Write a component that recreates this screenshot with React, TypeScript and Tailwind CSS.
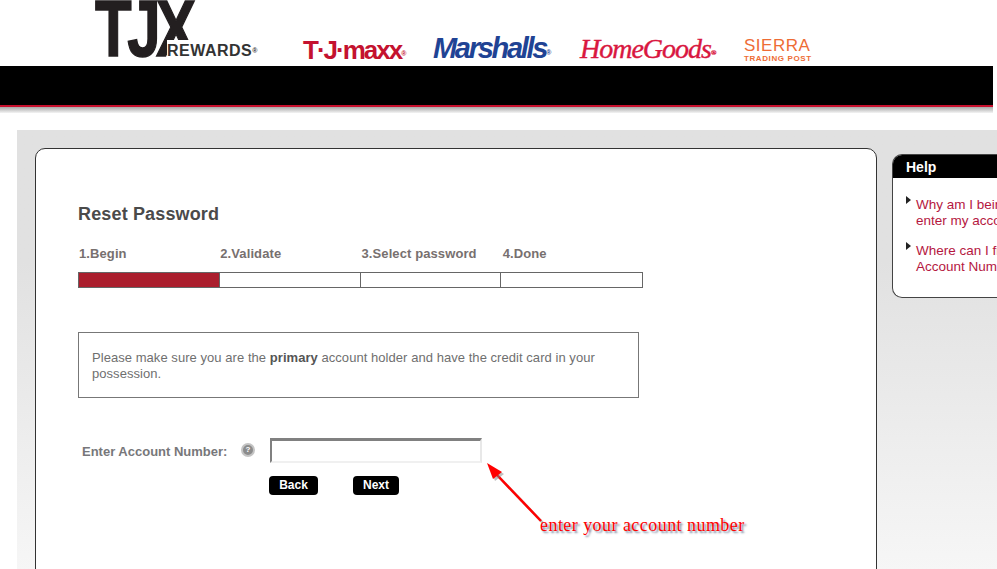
const steps = ['1.Begin', '2.Validate', '3.Select password', '4.Done'];

function Logos() {
  return (
    <div className="h-[66px] bg-white flex items-end overflow-hidden">
      <div className="relative w-[162px] h-[66px] ml-[95px] shrink-0">
        <span className="absolute left-[-16px] top-[-11px] text-[80px] leading-[80px] font-bold tracking-[-6px] scale-x-[0.75] text-[#231f20] [-webkit-text-stroke:1.5px_#231f20] font-['Liberation_Sans',sans-serif]">TJX</span>
        <span className="absolute left-[72px] top-[40px] bg-white h-[26px] pt-[1px] text-[16px] leading-[20px] font-bold tracking-[0.5px] text-[#333] whitespace-nowrap font-['Liberation_Sans',sans-serif]">
          REWARDS<sup className="text-[7px]">®</sup>
        </span>
      </div>
      <div className="ml-[46px] w-[103px] mb-[1px] text-[26px] leading-[30px] font-bold tracking-[-2px] text-[#c4122f] whitespace-nowrap font-['Liberation_Sans',sans-serif]">
        T·J·maxx<sup className="text-[7px]">®</sup>
      </div>
      <div className="ml-[27px] w-[121px] mb-[3px] text-[29px] leading-[30px] font-bold italic tracking-[-2.3px] text-[#1f4394] whitespace-nowrap font-['Liberation_Sans',sans-serif]">
        Marshalls<sup className="text-[7px]">®</sup>
      </div>
      <div className="ml-[26px] w-[137px] mb-[1px] text-[28px] leading-[32px] italic tracking-[-1px] text-[#d9173f] [-webkit-text-stroke:0.4px_#d9173f] whitespace-nowrap font-['Liberation_Serif',serif]">
        HomeGoods<sup className="text-[7px]">®</sup>
      </div>
      <div className="ml-[27px] w-[70px] mb-[3px] flex flex-col text-[#ee6c35] font-['Liberation_Sans',sans-serif]">
        <span className="text-[17px] leading-[17px] tracking-[0.5px] whitespace-nowrap">SIERRA</span>
        <span className="text-[8px] leading-[9px] font-bold tracking-[0.6px] whitespace-nowrap">TRADING POST</span>
      </div>
    </div>
  );
}

function HelpPanel() {
  return (
    <aside className="w-[130px] h-[144px] mt-[6px] ml-[15px] shrink-0 rounded-l-[10px] border border-r-0 border-[#444] bg-white overflow-hidden">
      <h3 className="h-[23px] bg-black pl-[13px] text-[14px] leading-[25px] font-bold text-white">Help</h3>
      <ul className="pt-[19px] pl-[13px] text-[13.5px] leading-[16px] text-[#b5173f] whitespace-nowrap">
        <li className="flex mb-[14px]">
          <span className="mt-[-1px] w-0 h-0 border-y-[4px] border-l-[5px] border-y-transparent border-l-[#222]" />
          <span className="ml-[5px]">Why am I being asked to<br />enter my account</span>
        </li>
        <li className="flex">
          <span className="mt-[-1px] w-0 h-0 border-y-[4px] border-l-[5px] border-y-transparent border-l-[#222]" />
          <span className="ml-[5px]">Where can I find my<br />Account Number?</span>
        </li>
      </ul>
    </aside>
  );
}

export default function App() {
  return (
    <div className="w-[997px] h-[569px] bg-white overflow-hidden font-['Liberation_Sans',Arial,sans-serif]">
      <Logos />
      <div className="w-[993px] h-[41px] bg-black border-b-2 border-[#c8102e]" />
      <div className="w-[993px] h-[6px] bg-gradient-to-b from-[#a8a8a8] to-[#f4f4f4]" />

      <main className="mt-[17px] ml-[17px] h-[439px] pt-[18px] pl-[18px] flex items-start bg-gradient-to-b from-[#e1e1e1] from-30% to-[#f6f6f6]">
        <section className="w-[842px] h-[480px] shrink-0 rounded-[10px] border border-[#333] bg-white pl-[42px] pt-[55px]">
          <h1 className="text-[18px] leading-[20px] font-bold tracking-[0.15px] text-[#4a4a4a]">Reset Password</h1>

          <div className="w-[565px] mt-[20px] grid grid-cols-4 text-[13px] leading-[20px] font-bold tracking-[0.1px] text-[#77706f]">
            {steps.map((step) => (
              <span key={step} className="pl-[1px] whitespace-nowrap">{step}</span>
            ))}
          </div>
          <div className="w-[565px] h-[16px] mt-[8px] grid grid-cols-4 border border-[#666]">
            <div className="bg-[#ab1e2d] border-r border-[#666]" />
            <div className="border-r border-[#666]" />
            <div className="border-r border-[#666]" />
            <div />
          </div>

          <div className="w-[561px] h-[66px] mt-[44px] border border-[#777] px-[13px] pt-[17px] text-[13px] leading-[16px] tracking-[0.05px] text-[#6f6f6f]">
            Please make sure you are the <b className="text-[#555]">primary</b> account holder and have the credit card in your possession.
          </div>

          <div className="mt-[40px] flex items-start">
            <label className="ml-[4px] w-[159px] text-[13px] leading-[28px] font-bold text-[#77777a]">Enter Account Number:</label>
            <span className="mt-[5px] w-[14px] h-[14px] rounded-full bg-[#8c8c8c] border-2 border-[#c4c4c4] text-white text-[8px] leading-[10px] font-bold text-center">?</span>
            <input className="ml-[15px] w-[212px] h-[25px] bg-white border-2 border-t-[3px] border-[#808080] border-r-[#e8e8e8] border-b-[#f0f0f0] outline-none" />
          </div>
          <div className="mt-[10px] ml-[191px] flex gap-[35px]">
            <button className="w-[49px] h-[19px] rounded-[4px] bg-black text-white text-[12px] leading-[19px] font-bold">Back</button>
            <button className="w-[46px] h-[19px] rounded-[4px] bg-black text-white text-[12px] leading-[19px] font-bold">Next</button>
          </div>
        </section>
        <HelpPanel />
      </main>

      {/* annotation drawn over the form */}
      <svg className="absolute left-[480px] top-[455px]" width="70" height="70" viewBox="0 0 70 70">
        <path d="M61 66 L17 20" stroke="#808080" strokeOpacity="0.5" strokeWidth="2.5" fill="none" transform="translate(2 2)" />
        <path d="M61 66 L17 20" stroke="#ff0000" strokeWidth="2.5" fill="none" />
        <path d="M7 8 L22 17 L13 24 Z" fill="#808080" fillOpacity="0.5" transform="translate(2 2)" />
        <path d="M7 8 L22 17 L13 24 Z" fill="#ff0000" />
      </svg>
      <span className="absolute left-[540px] top-[514px] text-[18px] leading-[22px] tracking-[0.45px] text-[#ff0000] whitespace-nowrap font-['Liberation_Serif',serif] [text-shadow:2px_2px_2px_#7f8aa0]">
        enter your account number
      </span>
    </div>
  );
}
